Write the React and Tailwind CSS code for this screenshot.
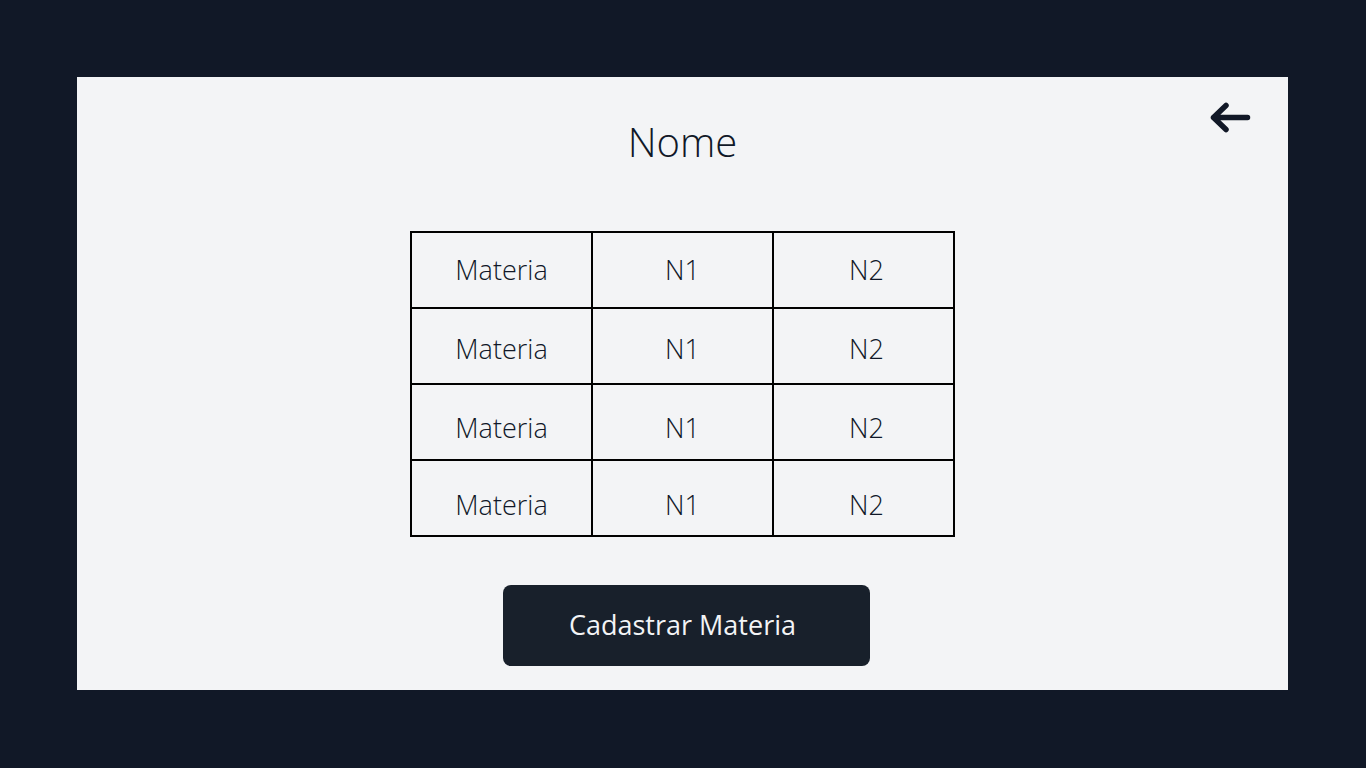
import React from 'react';

// per-row top padding: the labels sit a little lower in each row
const rows = [
    { id: 1, pad: 'pt-0' },
    { id: 2, pad: 'pt-[6px]' },
    { id: 3, pad: 'pt-[12px]' },
    { id: 4, pad: 'pt-[15px]' },
];

function BackArrow() {
    return (
        <svg width="46" height="36" viewBox="0 0 46 36" fill="none">
            <path
                d="M7.5 17.5H41.5M20 5.5L7.5 17.5L20 29.5"
                stroke="#111827"
                strokeWidth="5.5"
                strokeLinecap="round"
                strokeLinejoin="round"
            />
        </svg>
    );
}

export default function App() {
    const cell = 'border-[2.5px] border-black text-center text-[27px] font-light text-gray-900';

    return (
        <div className="min-h-screen bg-[#111827] p-[77px] pr-[78px]" style={{ fontFamily: '"Open Sans", sans-serif' }}>
            <div className="relative h-[613px] bg-[#f3f4f6] flex flex-col items-center">
                <button className="absolute right-[36px] top-[23px]">
                    <BackArrow />
                </button>

                <h1 className="mt-[45px] text-[40px] leading-none font-light text-gray-900">Nome</h1>

                {/* Grades table */}
                <table className="mt-[69px] w-[545px] border-collapse table-fixed">
                    <tbody>
                        {rows.map((r) => (
                            <tr key={r.id} className="h-[76px]">
                                <td className={`${cell} ${r.pad}`}>Materia</td>
                                <td className={`${cell} ${r.pad}`}>N1</td>
                                <td className={`${cell} ${r.pad} pl-[6px]`}>N2</td>
                            </tr>
                        ))}
                    </tbody>
                </table>

                <button className="mt-[48px] ml-[8px] pr-[8px] w-[367px] h-[81px] rounded-lg bg-[#18202b] text-[27px] text-gray-100">
                    Cadastrar Materia
                </button>
            </div>
        </div>
    );
}
